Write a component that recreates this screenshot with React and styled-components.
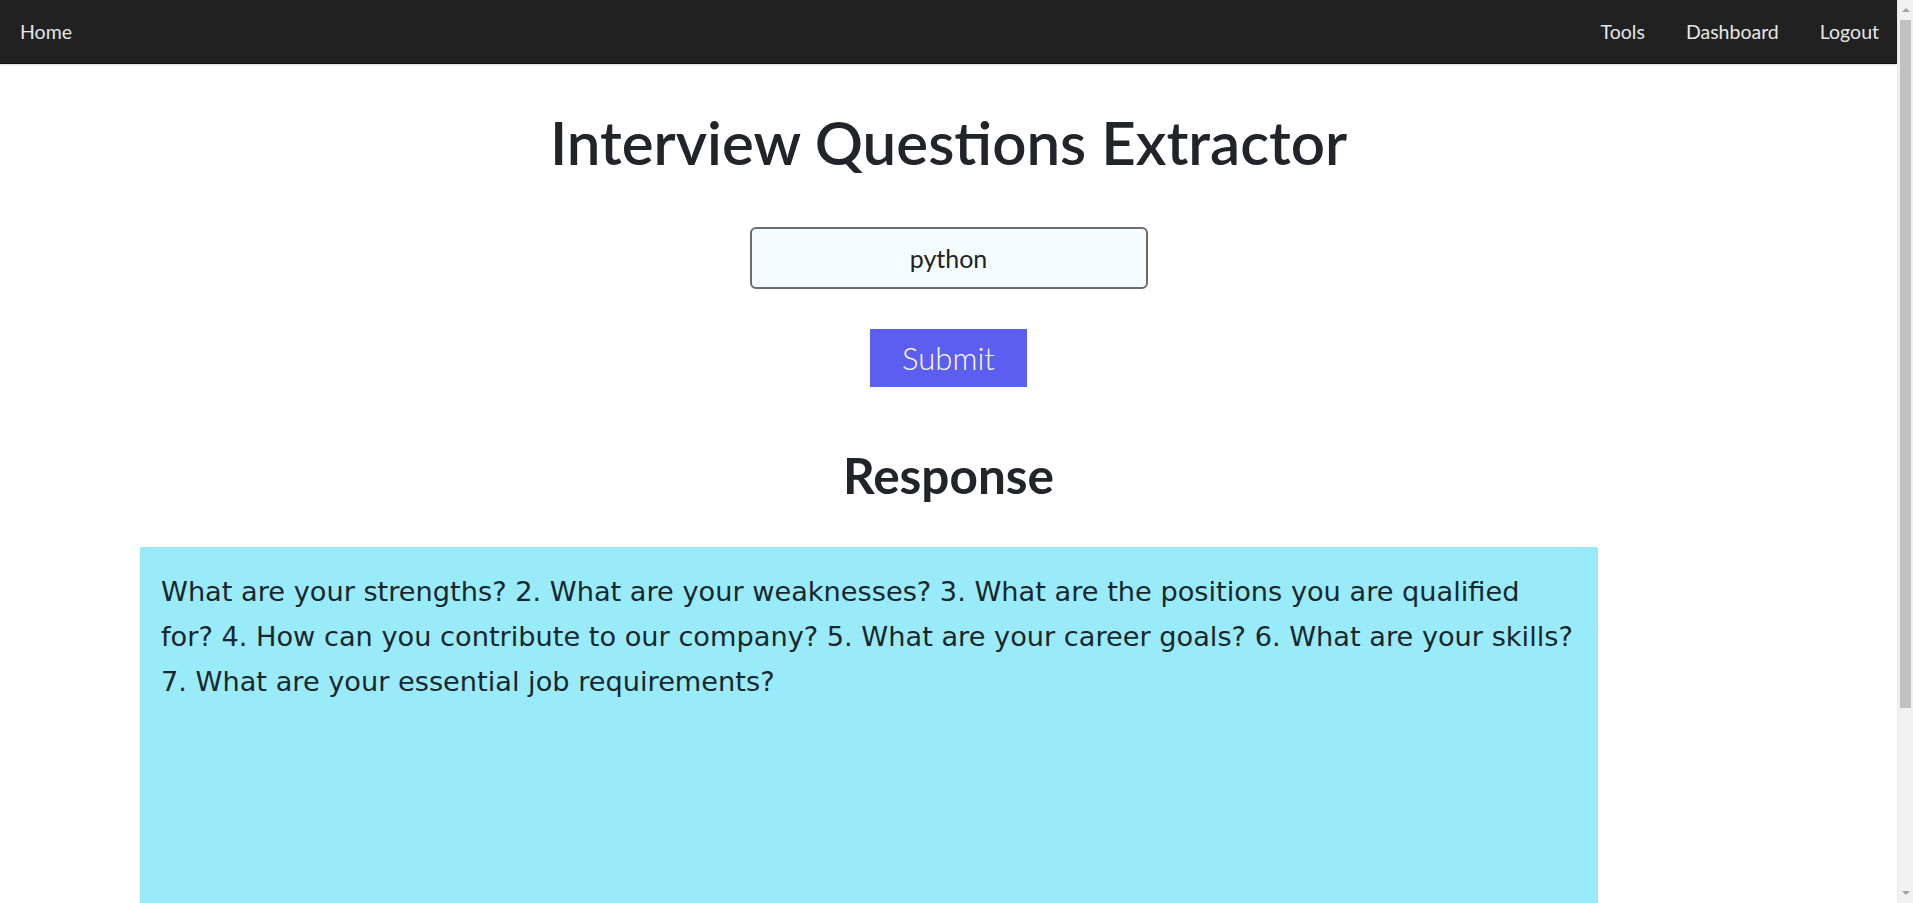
import { useState } from "react"
import styled, { createGlobalStyle } from "styled-components"

const GlobalStyle = createGlobalStyle`
  body {
    margin: 0;
    background: #ffffff;
    color: #212529;
    font-family: Lato, "Noto Sans", sans-serif;
  }
`

const InterviewExtractor = () => {
  const [topic, setTopic] = useState("python")
  const [response] = useState(
    "What are your strengths? 2. What are your weaknesses? 3. What are the positions you are qualified for? 4. How can you contribute to our company? 5. What are your career goals? 6. What are your skills? 7. What are your essential job requirements?"
  )

  return (
    <Layout>
      <GlobalStyle />
      <Page>
        <NavBar>
          <NavLink href="#">Home</NavLink>
          <NavGroup>
            <NavLink href="#">Tools</NavLink>
            <NavLink href="#">Dashboard</NavLink>
            <NavLink href="#">Logout</NavLink>
          </NavGroup>
        </NavBar>

        <Main>
          <Title>Interview Questions Extractor</Title>
          <Form onSubmit={(e) => e.preventDefault()}>
            <TopicInput value={topic} onChange={(e) => setTopic(e.target.value)} />
            <SubmitButton type="submit">Submit</SubmitButton>
          </Form>
          <SubTitle>Response</SubTitle>
          <ResponseBox>{response}</ResponseBox>
        </Main>
      </Page>

      {/* window scrollbar, as the browser drew it */}
      <ScrollTrack>
        <ScrollArrow $dir="up" />
        <ScrollThumb />
        <ScrollArrow $dir="down" />
      </ScrollTrack>
    </Layout>
  )
}

const Layout = styled.div`
  display: flex;
  align-items: flex-start;
`

const Page = styled.div`
  flex: 1;
  min-width: 0;
`

const ScrollTrack = styled.div`
  position: sticky;
  top: 0;
  display: flex;
  flex-direction: column;
  width: 16px;
  height: 100vh;
  background: #f1f1f1;
  border-left: 1px solid #e8e8e8;
  box-sizing: border-box;
`

const ScrollArrow = styled.div`
  display: flex;
  align-items: center;
  justify-content: center;
  height: 20px;

  &::after {
    content: "";
    border-left: 4px solid transparent;
    border-right: 4px solid transparent;
    ${(p) => (p.$dir === "up" ? "border-bottom: 4px solid #a3a3a3;" : "border-top: 4px solid #a3a3a3;")}
  }
`

const ScrollThumb = styled.div`
  height: 688px;
  margin: 0 2px;
  background: #c1c1c1;
  margin-bottom: auto;
`

const NavBar = styled.nav`
  display: flex;
  align-items: center;
  justify-content: space-between;
  height: 63px;
  padding: 0 18px 0 20px;
  background: #212121;
  border-bottom: 1px solid #111111;
  box-shadow: 0 1px 2px rgba(0, 0, 0, 0.15);
`

const NavGroup = styled.div`
  display: flex;
  align-items: center;
  gap: 41px;
`

const NavLink = styled.a`
  color: #e6e6e6;
  font-family: Lato, "Noto Sans", sans-serif;
  font-size: 19.5px;
  text-decoration: none;
`

const Main = styled.main`
  display: flex;
  flex-direction: column;
  align-items: center;
`

const Title = styled.h1`
  margin: 42px 0 0;
  font-size: 60px;
  line-height: 72px;
  font-weight: 600;
  color: #212529;
`

const Form = styled.form`
  display: flex;
  flex-direction: column;
  align-items: center;
  gap: 40px;
  margin-top: 49px;
`

const TopicInput = styled.input`
  box-sizing: border-box;
  width: 398px;
  height: 62px;
  border: 2px solid #6c6c6c;
  border-radius: 6px;
  background: #f5fcff;
  color: #222222;
  font-family: Lato, "Noto Sans", sans-serif;
  font-size: 25px;
  text-align: center;
  outline: none;
`

const SubmitButton = styled.button`
  width: 157px;
  height: 58px;
  border: none;
  background: #5b5ef0;
  color: #ffffff;
  font-family: Lato, "Noto Sans", sans-serif;
  font-size: 31px;
  font-weight: 300;
  cursor: pointer;
`

const SubTitle = styled.h2`
  margin: 59px 0 0;
  font-size: 49.5px;
  line-height: 59px;
  font-weight: 700;
  color: #212529;
`

const ResponseBox = styled.div`
  box-sizing: border-box;
  align-self: flex-start;
  width: 1458px;
  min-height: 590px;
  margin: 42px 0 0 140px;
  padding: 22px 21px;
  background: #9aebfa;
  color: #17272c;
  font-family: "DejaVu Sans", sans-serif;
  font-size: 27.2px;
  line-height: 45px;
`

export default InterviewExtractor
